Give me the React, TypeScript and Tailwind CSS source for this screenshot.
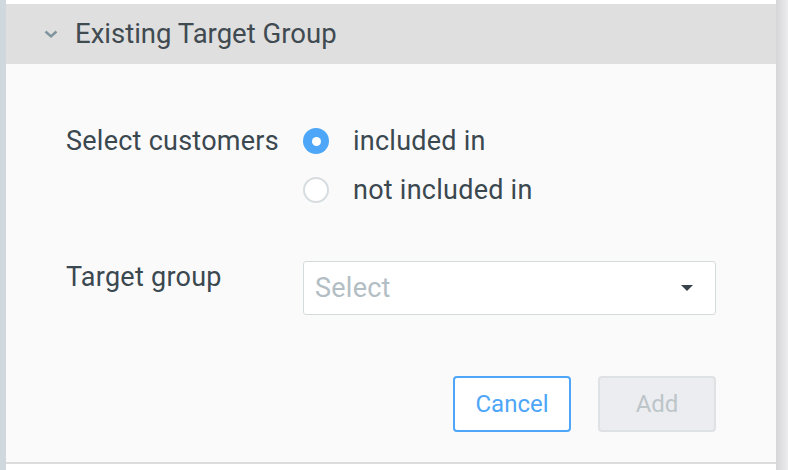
import React from 'react';

const App = () => {
  return (
    <div className="flex w-[788px] h-[470px] bg-white font-['Roboto',sans-serif] text-[#3b4850] overflow-hidden">
      <div className="w-[6px] bg-[#cfd8dc]" />
      <div className="flex-1 flex flex-col pt-[4px]">
        <div className="h-[60px] flex items-center pl-[38px] gap-[17px] bg-[#dfdfdf]">
          <svg width="14" height="9" viewBox="0 0 14 9" className="mt-[1px]">
            <path d="M1.5 1.5 L7 6.5 L12.5 1.5" stroke="#7f939d" strokeWidth="2.4" fill="none" />
          </svg>
          <span className="text-[27.5px] text-[#3f4a51]">Existing Target Group</span>
        </div>
        <div className="h-[400px] bg-[#fafafa] pl-[60px] pt-[59px] border-b-2 border-[#dcdcdc]">
          <div className="w-[650px] flex flex-col tracking-[0.25px]">
            <div className="flex items-start">
              <span className="w-[237px] text-[27px] leading-[36px]">Select customers</span>
              <div className="flex flex-col gap-[13px]">
                <label className="flex items-center h-[36px] gap-[24px] text-[27px]">
                  <span className="w-[26px] h-[26px] rounded-full bg-[#4da6f7] flex items-center justify-center">
                    <span className="w-[9px] h-[9px] rounded-full bg-white" />
                  </span>
                  included in
                </label>
                <label className="flex items-center h-[36px] gap-[24px] text-[27px]">
                  <span className="w-[26px] h-[26px] rounded-full bg-white border-2 border-[#d6dcdf]" />
                  not included in
                </label>
              </div>
            </div>
            <div className="flex items-start mt-[53px]">
              <span className="w-[237px] text-[27px] leading-[36px] -mt-[2px]">Target group</span>
              <div className="flex-1 h-[54px] bg-white border border-[#d5dadd] rounded-[3px] flex items-center justify-between pl-[11px] pr-[22px]">
                <span className="text-[27px] text-[#b3bec4]">Select</span>
                <svg width="12" height="6" viewBox="0 0 12 6">
                  <path d="M0 0 L12 0 L6 6 Z" fill="#37424a" />
                </svg>
              </div>
            </div>
            <div className="flex justify-end gap-[27px] mt-[61px] tracking-normal">
              <button className="w-[118px] h-[56px] rounded-[4px] border-2 border-[#4da6f7] text-[#4da6f7] text-[24px] bg-white">
                Cancel
              </button>
              <button className="w-[118px] h-[56px] rounded-[4px] border-2 border-[#dfe2e5] text-[#bcc5c9] text-[24px] bg-[#ecedf0]">
                Add
              </button>
            </div>
          </div>
        </div>
      </div>
      <div className="w-[12px] bg-gradient-to-r from-[#d6d6d8] to-[#ececee]" />
    </div>
  );
};

export default App;
